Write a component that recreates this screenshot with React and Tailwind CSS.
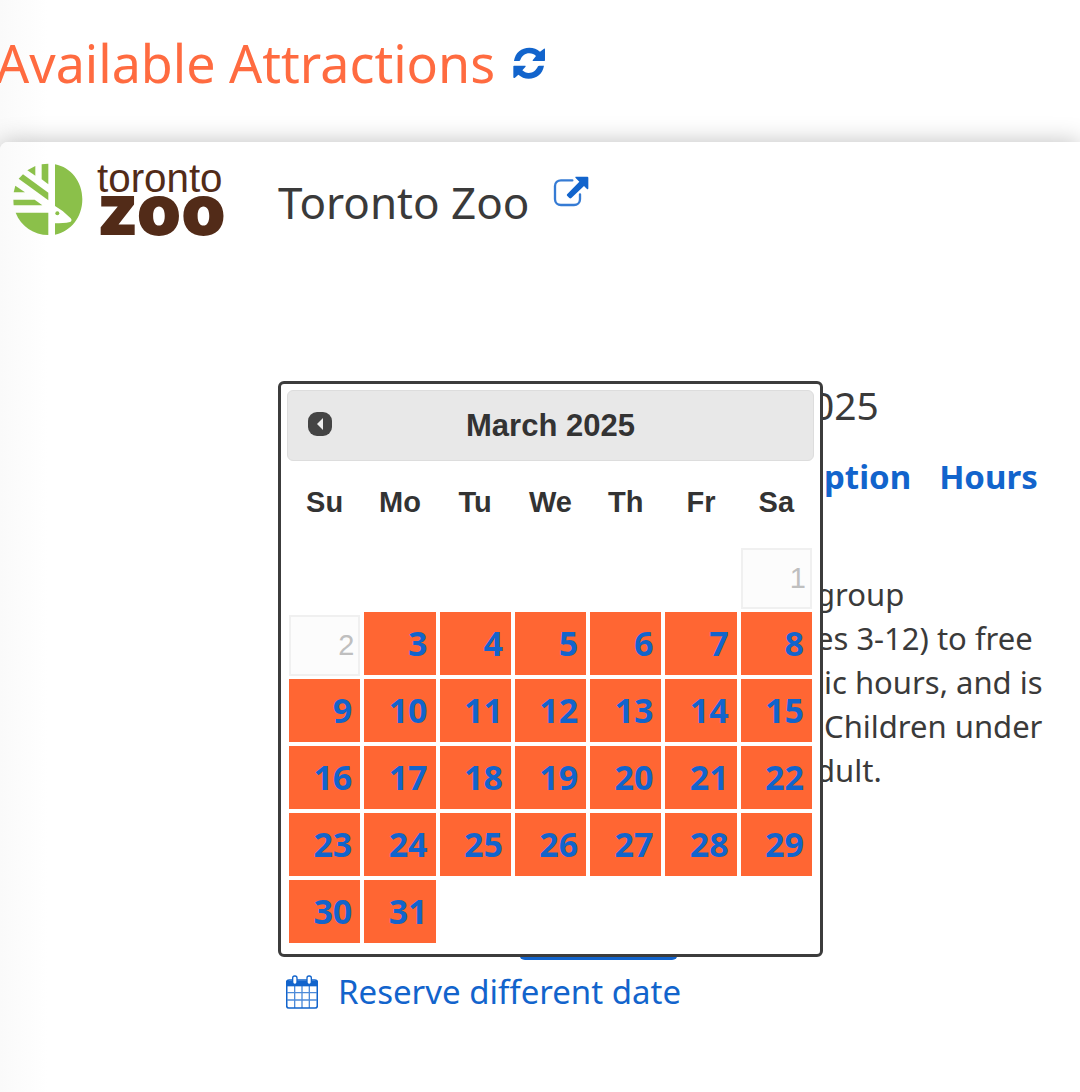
import { useState } from "react";

const WEEKDAYS = ["Su", "Mo", "Tu", "We", "Th", "Fr", "Sa"];

// March 2025 starts on a Saturday
const WEEKS = [
  [null, null, null, null, null, null, 1],
  [2, 3, 4, 5, 6, 7, 8],
  [9, 10, 11, 12, 13, 14, 15],
  [16, 17, 18, 19, 20, 21, 22],
  [23, 24, 25, 26, 27, 28, 29],
  [30, 31, null, null, null, null, null],
];

const FIRST_OPEN_DAY = 3;

function RefreshIcon() {
  return (
    <svg className="h-8 w-8" viewBox="0 0 96 96" fill="currentColor">
      <path d="M3 41C7 17 25 2 49 2c13 0 23 4 32 12l12-9c2-1 3 0 3 2v33c0 1-1 2-2 2H61c-2 0-3-2-1-4l9-11c-5-5-12-8-20-8-13 0-22 7-27 20-1 2-2 3-4 3H4c-1 0-1-1-1-1z" />
      <path d="M93 56c-4 24-22 39-46 39-12 0-23-5-31-12l-10 9c-3 2-5 1-5-1V58c0-1 1-2 2-2h33c2 0 3 2 1 4l-9 10c5 5 12 8 19 8 13 0 22-7 28-20 1-1 2-2 4-2z" />
    </svg>
  );
}

function ExternalLinkIcon() {
  return (
    <svg className="h-8 w-9" viewBox="0 0 108 96" fill="none">
      <path
        d="M58 13H24C14 13 6 20 6 30v40c0 10 8 17 18 17h39c10 0 18-7 18-17V55"
        stroke="currentColor"
        strokeWidth="7"
        strokeLinecap="round"
        opacity=".85"
      />
      <path
        d="M69 2h34c2 0 3 1 3 3v32c0 3-2 4-4 2l-9-9-38 36c-2 2-4 2-6 0l-6-6c-2-2-2-4 0-6l36-37-11-11c-2-2-1-4 1-4z"
        fill="currentColor"
      />
    </svg>
  );
}

function CalendarIcon() {
  return (
    <svg className="h-9 w-8" viewBox="0 0 96 108" fill="none">
      <path
        d="M9 18h78c4 0 7 3 7 7v70c0 4-3 7-7 7H9c-4 0-7-3-7-7V25c0-4 3-7 7-7z"
        stroke="currentColor"
        strokeWidth="5"
      />
      <path d="M3 20h90v17H3z" fill="currentColor" />
      <path
        d="M4 56h88M4 78h88M26 36v66M48 36v66M70 36v66"
        stroke="currentColor"
        strokeWidth="4"
        opacity=".75"
      />
      <rect x="20" y="6" width="13" height="25" rx="6" fill="white" stroke="currentColor" strokeWidth="4" />
      <rect x="63" y="6" width="13" height="25" rx="6" fill="white" stroke="currentColor" strokeWidth="4" />
    </svg>
  );
}

function ZooLogo() {
  return (
    <svg
      className="h-20 w-[214px] overflow-visible"
      viewBox="36 60 642 240"
      role="img"
      aria-label="Toronto Zoo"
    >
      <g fill="#8bc04a">
        <path d="M165 73C213 82 247 125 247 178s-34 97-82 106v-34c16 0 32-1 45-4 5-1 6-7 2-11l-24-22-23-15z" />
        <circle cx="172" cy="220" r="6" />
        <path d="M125 73l20-2v62l-20-15z" />
        <path d="M82 91l24-13v29z" />
        <path d="M56 116l13-13 76 55v23z" />
        <path d="M46 137l29 20H41z" />
        <path d="M40 179h64l23 17H41z" />
        <path d="M47 218h98v67c-44 0-82-26-98-67z" />
      </g>
      <g fill="#522b18">
        <text x="291" y="155" fontSize="121" fontFamily="Liberation Sans, sans-serif">
          toronto
        </text>
        <text x="290" y="285" fontSize="213" fontWeight="900" fontFamily="Inter, sans-serif">
          zoo
        </text>
      </g>
    </svg>
  );
}

function DayCell({ day, selected, onSelect }) {
  if (!day) {
    return <td />;
  }

  if (day < FIRST_OPEN_DAY) {
    return (
      <td className="px-[2px]">
        <span className="mt-[3px] block h-[61px] border-2 border-[#f0f0f0] bg-[#fcfcfc] pr-1 text-right font-['Liberation_Sans',sans-serif] text-[29px] leading-[56px] text-[#bfbfbf]">
          {day}
        </span>
      </td>
    );
  }

  return (
    <td className="px-[2px]">
      <button
        type="button"
        aria-pressed={selected === day}
        onClick={() => onSelect(day)}
        className="block h-[63px] w-full bg-[#ff6633] pr-2 text-right text-[34px] leading-[63px] font-bold text-[#1264cc]"
      >
        {day}
      </button>
    </td>
  );
}

function DatePicker() {
  const [selected, setSelected] = useState(null);

  return (
    <div className="absolute top-[221px] left-0 h-[576px] w-[545px] rounded-md border-3 border-[#3c3c3c] bg-white p-[6px]">
      <div className="flex h-[71px] items-center rounded-md border border-[#dddddd] bg-[#e8e8e8] px-5">
        <button type="button" aria-label="Previous month" className="w-6 pb-1">
          <svg className="h-6 w-6" viewBox="0 0 24 24">
            <rect width="24" height="24" rx="9" fill="#444444" />
            <path d="M15 6v12l-6-6z" fill="#eeeeee" />
          </svg>
        </button>
        <h3 className="grow pr-6 text-center font-['Liberation_Sans',sans-serif] text-[31px] leading-9 font-bold text-[#333333]">
          March 2025
        </h3>
      </div>
      <table className="w-full table-fixed border-collapse">
        <thead>
          <tr className="h-[82px]">
            {WEEKDAYS.map((name) => (
              <th
                key={name}
                scope="col"
                className="font-['Liberation_Sans',sans-serif] text-[29px] leading-9 font-bold text-[#333333]"
              >
                {name}
              </th>
            ))}
          </tr>
        </thead>
        <tbody>
          {WEEKS.map((week, i) => (
            <tr key={i} className="h-[67px]">
              {week.map((day, j) => (
                <DayCell key={j} day={day} selected={selected} onSelect={setSelected} />
              ))}
            </tr>
          ))}
        </tbody>
      </table>
    </div>
  );
}

export default function App() {
  return (
    <div className="flex min-h-screen flex-col overflow-hidden bg-white bg-linear-to-r from-[#fafafa] to-white to-[48px] font-['Noto_Sans',sans-serif] text-[#3a3a3a]">
      <header className="flex h-[142px] items-center gap-[18px] pb-4">
        <h1 className="-ml-1 text-[52px] leading-[72px] text-[#ff6b40]">Available Attractions</h1>
        <button type="button" aria-label="Refresh" className="text-[#1264cc]">
          <RefreshIcon />
        </button>
      </header>

      <main className="flex grow rounded-tl-lg bg-linear-to-r from-[#fafafa] to-white to-[48px] pt-[18px] pb-16 shadow-[0_0_24px_rgba(0,0,0,0.25)]">
        <div className="w-[278px] shrink-0 pl-3">
          <ZooLogo />
        </div>

        <section className="relative grow">
          <div className="flex h-[72px] gap-6 pt-3">
            <h2 className="text-[44px] leading-[60px]">Toronto Zoo</h2>
            <a href="#site" aria-label="Open attraction website" className="pt-1 text-[#1264cc]">
              <ExternalLinkIcon />
            </a>
          </div>

          <div className="mt-[147px] ml-[534px]">
            <p className="text-[39px] leading-[52px]">025</p>
            <nav className="mt-6 flex gap-7 pl-3 text-[33px] leading-[44px] font-bold text-[#1264cc]">
              <a href="#description">ption</a>
              <a href="#hours">Hours</a>
            </nav>
            <p className="mt-[73px] pl-1 text-[31px] leading-[44px] whitespace-pre">
              {"group\nes 3-12) to free\nlic hours, and is\n Children under\ndult."}
            </p>
          </div>

          <button
            type="button"
            aria-label="Reserve"
            className="mt-[104px] ml-[241px] block h-16 w-[159px] rounded-md bg-[#1264cc]"
          />

          <a href="#reserve" className="mt-[10px] ml-2 flex w-fit items-center gap-5 text-[#1264cc]">
            <CalendarIcon />
            <span className="text-[33px] leading-[44px]">Reserve different date</span>
          </a>

          <DatePicker />
        </section>
      </main>
    </div>
  );
}
